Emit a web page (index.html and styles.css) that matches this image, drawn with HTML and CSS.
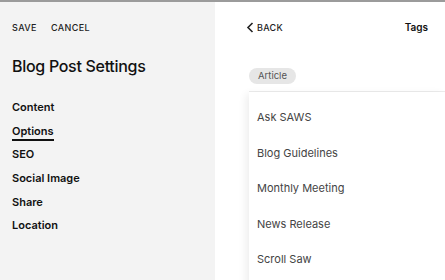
FILE: index.html
```html
<!DOCTYPE html>
<html lang="en">
<head>
  <meta charset="UTF-8" />
  <title>Blog Post Settings</title>
  <link rel="stylesheet" href="styles.css">
</head>
<body>
  <div class="frame">
    <aside class="sidebar">
      <div class="actions">
        <a class="action">Save</a>
        <a class="action">Cancel</a>
      </div>
      <h1>Blog Post Settings</h1>
      <ul class="nav">
        <li>Content</li>
        <li class="active">Options</li>
        <li>SEO</li>
        <li>Social Image</li>
        <li>Share</li>
        <li>Location</li>
      </ul>
    </aside>

    <main class="panel">
      <div class="panel-head">
        <a class="back">
          <svg width="8" height="11" viewBox="0 0 8 11"><path d="M6.5 1 L2 5.5 L6.5 10" fill="none" stroke="#222" stroke-width="1.6"/></svg>
          Back
        </a>
        <span class="title">Tags</span>
      </div>

      <div class="tags">
        <span class="pill">Article</span>
      </div>

      <ul class="options">
        <li>Ask SAWS</li>
        <li>Blog Guidelines</li>
        <li>Monthly Meeting</li>
        <li>News Release</li>
        <li>Scroll Saw</li>
      </ul>
    </main>
  </div>
</body>
</html>
```

FILE: styles.css
```css
body {
  margin: 0;
  font-family: Inter, 'Open Sans', sans-serif;
  color: #111;
  background: #fff;
}
.frame {
  display: flex;
  height: 278px;
  border-top: 2px solid #9b9b9b;
  overflow: hidden;
}
.sidebar {
  width: 203px;
  background: #f3f3f3;
  padding-left: 12px;
}
.actions {
  display: flex;
  gap: 14px;
  padding-top: 20px;
}
.action {
  font-size: 9px;
  font-weight: 500;
  letter-spacing: 0.4px;
  text-transform: uppercase;
  color: #222;
}
h1 {
  margin: 23px 0 0;
  font-size: 16px;
  font-weight: 500;
  letter-spacing: -0.3px;
}
.nav {
  list-style: none;
  margin: 25px 0 0;
  padding: 0;
}
.nav li {
  font-size: 11px;
  font-weight: 600;
  height: 23.7px;
  line-height: 13px;
}
.nav li.active {
  display: table;
  border-bottom: 2px solid #111;
  height: 14px;
  margin-bottom: 7.7px;
}
.panel {
  flex: 1;
  position: relative;
}
.panel-head {
  display: flex;
  justify-content: space-between;
  align-items: center;
  padding: 19px 17px 0 31px;
}
.back {
  display: flex;
  align-items: center;
  gap: 3px;
  font-size: 9px;
  font-weight: 500;
  letter-spacing: 0.3px;
  text-transform: uppercase;
  color: #222;
}
.title {
  font-size: 10px;
  font-weight: 600;
}
.tags {
  margin-left: 34px;
  padding-top: 30px;
  padding-bottom: 7px;
  border-bottom: 1px solid #ececec;
}
.pill {
  display: inline-block;
  background: #e6e6e6;
  border-radius: 8px;
  padding: 1px 9px;
  font-size: 9.5px;
  line-height: 14px;
  color: #555;
}
.options {
  list-style: none;
  margin: 0 0 0 34px;
  padding: 8px 0 0 8px;
  background: #fff;
  box-shadow: -3px 2px 8px rgba(0, 0, 0, 0.07);
  height: 200px;
}
.options li {
  height: 35.5px;
  line-height: 35.5px;
  font-size: 11px;
  color: #444;
}
```
